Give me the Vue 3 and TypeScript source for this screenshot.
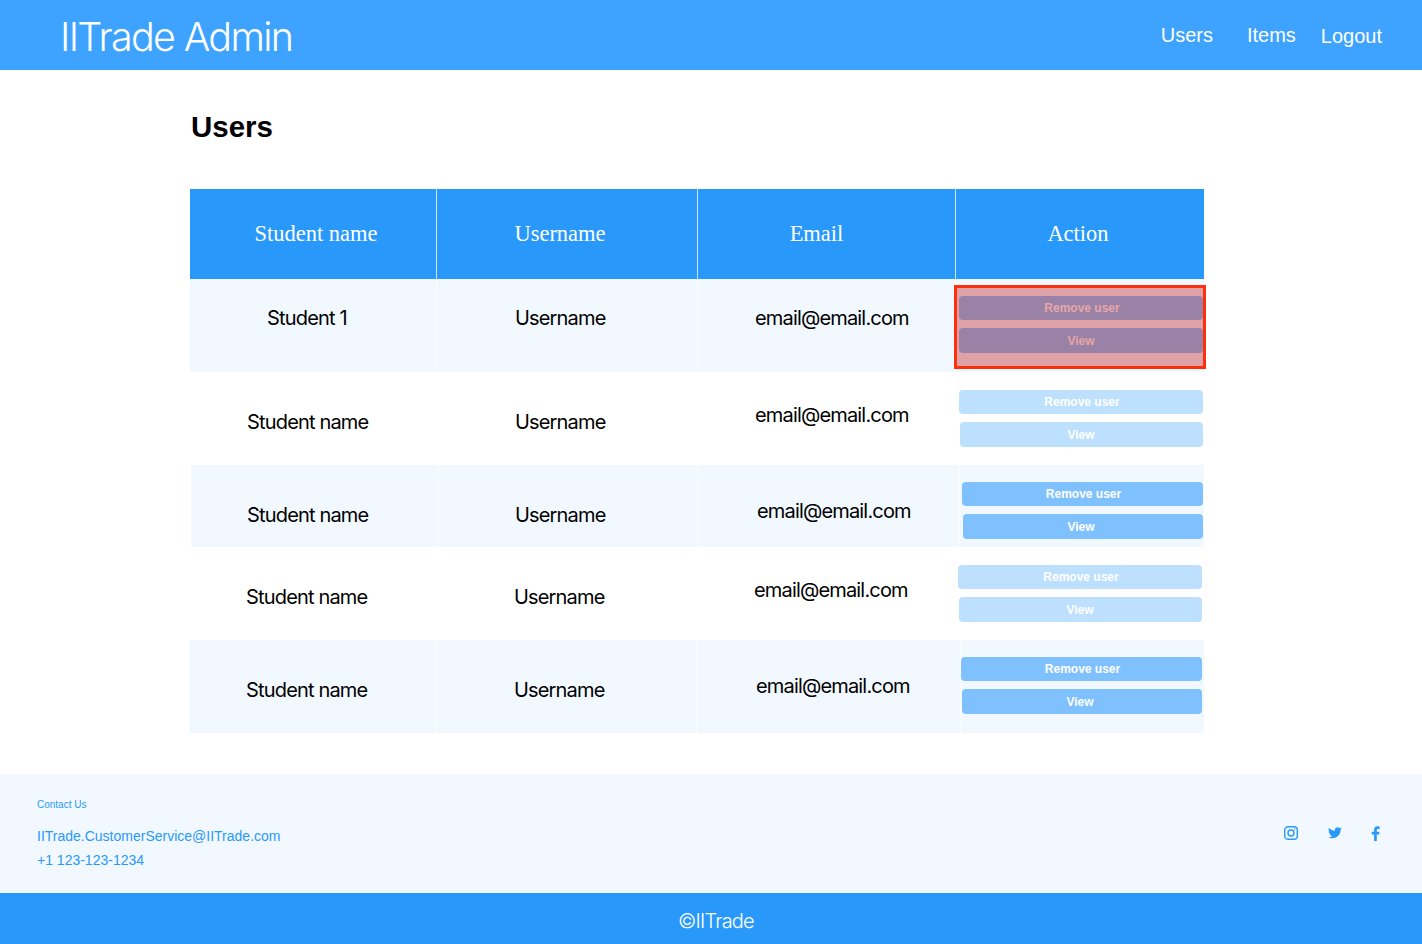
<script setup lang="ts">
// rows in the reference are hand-placed and drift a little, so each row keeps its own offsets
interface Row {
  name: string
  height: number
  tint: boolean
  inset: number // left offset of the first column
  cols: string
  nameX: number
  userX: number
  emailX: number
  textTop: number
  emailTop: number
  btnTop: number
  btnLeft: number
  btnRight: number
  viewInset: number
  viewPad: number
}

const rows: Row[] = [
  { name: 'Student 1', height: 93, tint: true, inset: 0, cols: '246px 260px 257px 248px', nameX: 77, userX: 78, emailX: 57, textTop: 27, emailTop: 27, btnTop: 17, btnLeft: 3, btnRight: 1, viewInset: 0, viewPad: 0 },
  { name: 'Student name', height: 93, tint: false, inset: 0, cols: '246px 260px 257px 248px', nameX: 57, userX: 78, emailX: 57, textTop: 38, emailTop: 31, btnTop: 18, btnLeft: 3, btnRight: 1, viewInset: 1, viewPad: 1 },
  { name: 'Student name', height: 82, tint: true, inset: 1, cols: '247px 258px 261px 244px', nameX: 56, userX: 76, emailX: 59, textTop: 38, emailTop: 34, btnTop: 17, btnLeft: 2, btnRight: 1, viewInset: 1, viewPad: 4 },
  { name: 'Student name', height: 93, tint: false, inset: 0, cols: '246px 260px 257px 248px', nameX: 56, userX: 77, emailX: 56, textTop: 38, emailTop: 31, btnTop: 18, btnLeft: 2, btnRight: 2, viewInset: 1, viewPad: 1 },
  { name: 'Student name', height: 93, tint: true, inset: 0, cols: '246px 259px 263px 243px', nameX: 56, userX: 77, emailX: 59, textTop: 38, emailTop: 34, btnTop: 17, btnLeft: 0, btnRight: 2, viewInset: 1, viewPad: 4 },
]

const headers = [
  { label: 'Student name', shiftL: 6, shiftR: 0 },
  { label: 'Username', shiftL: 0, shiftR: 14 },
  { label: 'Email', shiftL: 0, shiftR: 20 },
  { label: 'Action', shiftL: 0, shiftR: 4 },
]
</script>

<template>
  <div class="page">
    <header class="topbar">
      <div class="brand">IITrade Admin</div>
      <nav class="nav">
        <a class="nav-users">Users</a>
        <a class="nav-items">Items</a>
        <a class="nav-logout">Logout</a>
      </nav>
    </header>

    <main class="main">
      <h1 class="title">Users</h1>

      <div class="table">
        <div class="head">
          <div
            v-for="h in headers"
            :key="h.label"
            class="head-cell"
            :style="{ paddingLeft: h.shiftL + 'px', paddingRight: h.shiftR + 'px' }"
          >
            {{ h.label }}
          </div>
        </div>

        <div
          v-for="(row, i) in rows"
          :key="i"
          class="row"
          :class="{ tint: row.tint }"
          :style="{ height: row.height + 'px', gridTemplateColumns: row.cols, marginLeft: row.inset + 'px' }"
        >
          <div class="cell" :style="{ paddingLeft: row.nameX + 'px', paddingTop: row.textTop + 'px' }">{{ row.name }}</div>
          <div class="cell" :style="{ paddingLeft: row.userX + 'px', paddingTop: row.textTop + 'px' }">Username</div>
          <div class="cell" :style="{ paddingLeft: row.emailX + 'px', paddingTop: row.emailTop + 'px' }">email@email.com</div>
          <div
            class="cell actions"
            :style="{ paddingTop: row.btnTop + 'px', paddingLeft: row.btnLeft + 'px', paddingRight: row.btnRight + 'px' }"
          >
            <button class="btn remove">Remove user</button>
            <button class="btn view" :style="{ marginLeft: row.viewInset + 'px', paddingRight: row.viewPad + 'px' }">View</button>
          </div>
        </div>

        <div class="highlight"></div>
      </div>
    </main>

    <footer class="contact">
      <div class="contact-info">
        <div class="contact-label">Contact Us</div>
        <div class="contact-line first">IITrade.CustomerService@IITrade.com</div>
        <div class="contact-line">+1 123-123-1234</div>
      </div>
      <div class="social">
        <svg width="16" height="16" viewBox="0 0 16 16" fill="none" stroke="#2899fb" stroke-width="1.4">
          <rect x="1.7" y="1.7" width="12.6" height="12.6" rx="3.4" />
          <circle cx="8" cy="8" r="3" />
          <circle cx="11.7" cy="4.3" r="0.7" fill="#2899fb" stroke="none" />
        </svg>
        <svg class="tw" width="14" height="12" viewBox="0 0 24 20" fill="#2899fb">
          <path d="M24 2.400c-.9.400-1.800.700-2.800.800 1-.600 1.800-1.600 2.200-2.700-1 .600-2 1-3.100 1.200C19.300.700 18 0 16.600 0c-2.700 0-4.900 2.200-4.900 4.900 0 .400 0 .800.100 1.100C7.700 5.800 4.100 3.900 1.700.900c-.400.700-.700 1.600-.700 2.500 0 1.700.900 3.200 2.200 4.100-.800 0-1.600-.200-2.200-.600v.100c0 2.400 1.700 4.400 3.900 4.800-.400.100-.800.200-1.300.200-.300 0-.600 0-.900-.100.600 2 2.400 3.400 4.600 3.400-1.700 1.300-3.800 2.100-6.100 2.100-.400 0-.800 0-1.200-.1C2.200 18.200 4.800 19 7.500 19c9.100 0 14-7.500 14-14v-.600c1-.700 1.800-1.600 2.500-2z" />
        </svg>
        <svg class="fb" width="9" height="15" viewBox="0 0 9 15" fill="#2899fb">
          <path d="M5.800 15V8.500h2.300l.4-2.700H5.800V4.200c0-.800.300-1.300 1.400-1.300h1.400V.400C8.300.300 7.500.200 6.600.200 4.500.200 3.100 1.500 3.100 3.800v2H.700v2.700h2.400V15z" />
        </svg>
      </div>
    </footer>

    <div class="copyright">©IITrade</div>
  </div>
</template>

<style>
html,
body {
  margin: 0;
  background: #fff;
}
</style>

<style scoped>
.page {
  width: 1422px;
  height: 944px;
  overflow: hidden;
  display: flex;
  flex-direction: column;
  font-family: Inter, 'Liberation Sans', sans-serif;
  color: #000;
}
.topbar {
  height: 70px;
  flex: none;
  background: #3ea3ff;
  color: #fff;
  display: flex;
  align-items: center;
  justify-content: space-between;
  padding: 0 40px 0 60px;
}
.brand {
  font-size: 39.5px;
  font-weight: 300;
  letter-spacing: -1.7px;
  line-height: 46px;
  margin-top: 4px;
}
.nav {
  display: flex;
  font-family: 'Liberation Sans', Arial, sans-serif;
  font-size: 20px;
  line-height: 24px;
}
.nav-items {
  margin-left: 34px;
}
.nav-logout {
  margin-left: 25px;
  margin-top: 1px;
}
.main {
  flex: 1;
  padding: 0 218px 0 190px;
}
.title {
  margin: 39px 0 45px 1px;
  font-family: 'Liberation Sans', Arial, sans-serif;
  font-size: 29.5px;
  font-weight: 700;
  line-height: 35px;
}
.table {
  position: relative;
  width: 1014px;
}
.head {
  height: 90px;
  display: grid;
  grid-template-columns: 246px 260px 257px 248px;
  column-gap: 1px;
  background: #cfe7fe;
}
.head-cell {
  background: #2899fb;
  color: #fff;
  font-family: 'Liberation Serif', 'Times New Roman', serif;
  font-size: 22.5px;
  line-height: 90px;
  text-align: center;
}
.row {
  display: grid;
  column-gap: 1px;
  font-size: 20px;
  line-height: 24px;
  letter-spacing: -0.83px;
}
.row.tint {
  background: #fbfdff;
}
.tint .cell {
  background: #f2f8ff;
}
.cell {
  box-sizing: border-box;
  white-space: nowrap;
}
.actions {
  display: flex;
  flex-direction: column;
  gap: 8px;
}
.btn {
  border: 0;
  padding: 0;
  flex: none;
  height: 24px;
  border-radius: 4px;
  color: #fff;
  font-family: 'Liberation Sans', Arial, sans-serif;
  font-size: 12px;
  font-weight: 700;
  letter-spacing: 0;
  background: #7fc1ff;
}
.btn.remove {
  padding-left: 2px;
}
.row:not(.tint) .btn {
  background: #bde0fe;
}
.btn.view {
  height: 25px;
}
.highlight {
  position: absolute;
  left: 764px;
  top: 96px;
  width: 252px;
  height: 84px;
  box-sizing: border-box;
  border: 3px solid #fe2f0c;
  background: rgba(195, 32, 32, 0.4);
  pointer-events: none;
}
.contact {
  height: 119px;
  flex: none;
  background: #f2f8ff;
  color: #2899fb;
  display: flex;
  justify-content: space-between;
  font-family: 'Liberation Sans', Arial, sans-serif;
  padding: 0 42px 0 37px;
}
.contact-label {
  font-size: 10px;
  line-height: 14px;
  margin-top: 24px;
}
.contact-line {
  font-size: 14px;
  line-height: 24px;
}
.contact-line.first {
  margin-top: 12px;
}
.social {
  display: flex;
  align-items: flex-start;
  gap: 28px;
  padding-top: 51px;
}
.social .tw {
  margin: 2px 0 0 1px;
}
.social .fb {
  margin: 1px 0 0 1px;
}
.copyright {
  height: 51px;
  flex: none;
  background: #2899fb;
  color: #fff;
  font-size: 20px;
  font-weight: 350;
  letter-spacing: -0.8px;
  line-height: 57px;
  text-align: center;
  box-sizing: border-box;
  padding-left: 10px;
}
</style>
